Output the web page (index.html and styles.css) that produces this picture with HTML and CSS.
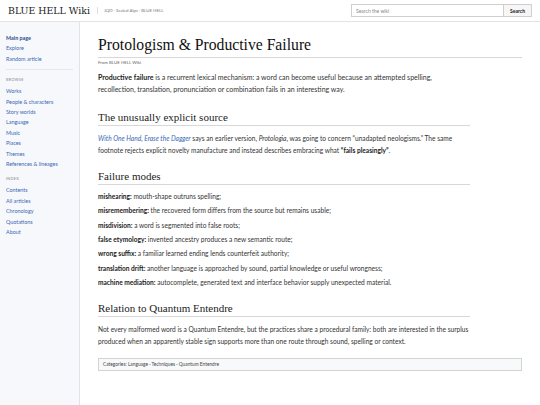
FILE: index.html
```html
<!DOCTYPE html>
<html lang="en">
<head>
<meta charset="utf-8">
<title>Protologism &amp; Productive Failure - BLUE HELL Wiki</title>
<link rel="stylesheet" href="styles.css">
</head>
<body>
<header class="topbar">
  <div class="brand">
    <a class="logo" href="#">BLUE HELL Wiki</a>
    <span class="sep"></span>
    <span class="crumbs">JQD · Scaled Alps · BLUE HELL</span>
  </div>
  <form class="search">
    <input class="search-input" type="text" placeholder="Search the wiki">
    <button class="search-btn" type="button">Search</button>
  </form>
</header>
<div class="layout">
  <nav class="sidebar">
    <ul class="nav-group first">
      <li><a class="strong" href="#">Main page</a></li>
      <li><a href="#">Explore</a></li>
      <li><a href="#">Random article</a></li>
    </ul>
    <div class="nav-label">BROWSE</div>
    <ul class="nav-group">
      <li><a href="#">Works</a></li>
      <li><a href="#">People &amp; characters</a></li>
      <li><a href="#">Story worlds</a></li>
      <li><a href="#">Language</a></li>
      <li><a href="#">Music</a></li>
      <li><a href="#">Places</a></li>
      <li><a href="#">Themes</a></li>
      <li><a href="#">References &amp; lineages</a></li>
    </ul>
    <div class="nav-label">INDEX</div>
    <ul class="nav-group">
      <li><a href="#">Contents</a></li>
      <li><a href="#">All articles</a></li>
      <li><a href="#">Chronology</a></li>
      <li><a href="#">Quotations</a></li>
      <li><a href="#">About</a></li>
    </ul>
  </nav>
  <main class="content">
    <h1 class="title">Protologism &amp; Productive Failure</h1>
    <div class="from">From BLUE HELL Wiki</div>
    <div class="body">
      <p class="para intro"><b>Productive failure</b> is a recurrent lexical mechanism: a word can become useful because an attempted spelling, recollection, translation, pronunciation or combination fails in an interesting way.</p>
      <h2 class="section">The unusually explicit source</h2>
      <p class="para"><a class="ilink" href="#"><i>With One Hand, Erase the Dagger</i></a> says an earlier version, <i>Protologia</i>, was going to concern “unadapted neologisms.” The same footnote rejects explicit novelty manufacture and instead describes embracing what <b>“fails pleasingly”</b>.</p>
      <h2 class="section">Failure modes</h2>
      <ul class="modes">
        <li><b>mishearing:</b> mouth-shape outruns spelling;</li>
        <li><b>misremembering:</b> the recovered form differs from the source but remains usable;</li>
        <li><b>misdivision:</b> a word is segmented into false roots;</li>
        <li><b>false etymology:</b> invented ancestry produces a new semantic route;</li>
        <li><b>wrong suffix:</b> a familiar learned ending lends counterfeit authority;</li>
        <li><b>translation drift:</b> another language is approached by sound, partial knowledge or useful wrongness;</li>
        <li><b>machine mediation:</b> autocomplete, generated text and interface behavior supply unexpected material.</li>
      </ul>
      <h2 class="section">Relation to Quantum Entendre</h2>
      <p class="para">Not every malformed word is a Quantum Entendre, but the practices share a procedural family: both are interested in the surplus produced when an apparently stable sign supports more than one route through sound, spelling or context.</p>
    </div>
    <div class="cats">Categories: Language · Techniques · Quantum Entendre</div>
  </main>
</div>
</body>
</html>
```
FILE: styles.css
```css
* { box-sizing: border-box; }
html, body { margin: 0; padding: 0; }
body {
  font-family: Lato, "Noto Sans", sans-serif;
  color: #333;
  background: #fff;
  width: 540px;
  height: 405px;
  overflow: hidden;
}
a { text-decoration: none; }

.topbar {
  height: 22px;
  border-bottom: 1px solid #e3e3e3;
  display: flex;
  align-items: center;
  justify-content: space-between;
  padding: 0 8px;
}
.brand { display: flex; align-items: center; }
.logo {
  font-family: "DejaVu Serif", serif;
  font-size: 9.4px;
  color: #222;
  line-height: 12px;
}
.sep {
  width: 1px;
  height: 7px;
  background: #ddd;
  margin: 0 6px 0 7px;
}
.crumbs { font-size: 4.4px; color: #777; }

.search { display: flex; height: 13px; }
.search-input {
  width: 152px;
  height: 13px;
  border: 1px solid #cfcfcf;
  border-right: none;
  padding: 0 4px;
  font-family: Lato, sans-serif;
  font-size: 5px;
  color: #333;
  outline: none;
  margin: 0;
}
.search-input::placeholder { color: #888; }
.search-btn {
  width: 29px;
  height: 13px;
  border: 1px solid #cfcfcf;
  background: #f6f6f6;
  font-family: Lato, sans-serif;
  font-weight: 700;
  font-size: 5px;
  color: #222;
  padding: 0;
  margin: 0;
}

.layout { display: flex; height: 383px; }
.sidebar {
  width: 80px;
  flex: none;
  background: #f6f8fb;
  border-right: 1px solid #dde4ee;
  padding: 11px 6px 0 6px;
}
.nav-group { list-style: none; margin: 0; padding: 0; }
.nav-group li { line-height: 10.4px; font-size: 5.4px; }
.nav-group a { color: #3b68b5; }
.nav-group a.strong { color: #2a4f8f; font-weight: 700; }
.nav-group.first {
  border-bottom: 1px solid #e4e8ee;
  padding-bottom: 5px;
  margin-bottom: 6px;
}
.nav-label {
  font-size: 3.8px;
  letter-spacing: 0.3px;
  color: #888;
  line-height: 8px;
  margin-bottom: 2px;
}
.nav-group + .nav-label { margin-top: 6px; }

.content {
  flex: 1;
  padding: 13px 18px 0 18px;
}
.title {
  font-family: "Liberation Serif", serif;
  font-weight: 400;
  font-size: 15.7px;
  line-height: 20px;
  color: #111;
  margin: 0;
  padding-bottom: 2px;
  border-bottom: 1px solid #d8d8d8;
}
.from {
  font-size: 4.4px;
  color: #666;
  line-height: 7px;
  margin-top: 1px;
}
.body { max-width: 372px; }
.para {
  font-size: 6.6px;
  line-height: 12px;
  margin: 6px 0 0 0;
  color: #333;
}
.para b { color: #222; }
.intro { font-size: 7px; margin: 5px 0 2px 0; }
.ilink { color: #3b68b5; }
.section {
  font-family: "Liberation Serif", serif;
  font-weight: 400;
  font-size: 11px;
  line-height: 14px;
  color: #222;
  margin: 13px 0 0 0;
  padding-bottom: 1px;
  border-bottom: 1px solid #d8d8d8;
}
.intro + .section { margin-top: 15px; }
.modes {
  list-style: none;
  margin: 5px 0 1px 0;
  padding: 0;
}
.modes li {
  font-size: 6.6px;
  line-height: 12px;
  margin-bottom: 2.33px;
  color: #333;
}
.modes b { color: #222; }
.cats {
  margin-top: 11px;
  border: 1px solid #d3d3d3;
  background: #f8f9fa;
  height: 13px;
  line-height: 11px;
  padding: 0 4px;
  font-size: 4.8px;
  color: #444;
}
```
